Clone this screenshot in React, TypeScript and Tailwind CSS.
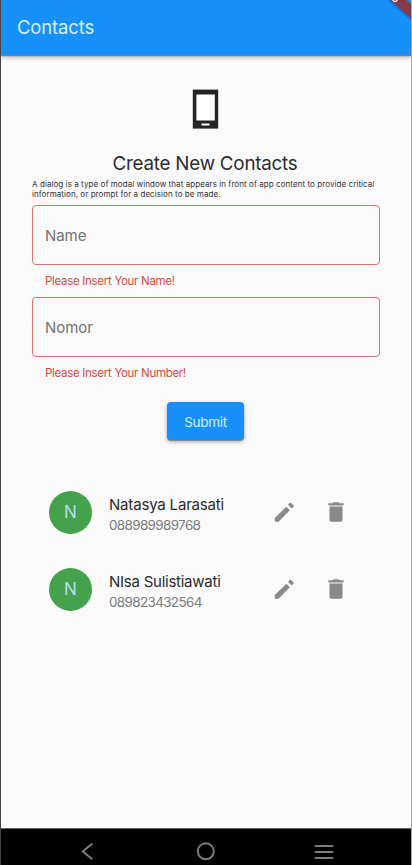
type Contact = { name: string; phone: string; nameSpacing: string };

const contacts: Contact[] = [
  { name: 'Natasya Larasati', phone: '088989989768', nameSpacing: 'tracking-[-0.18px]' },
  { name: 'NIsa Sulistiawati', phone: '089823432564', nameSpacing: 'tracking-[-0.25px]' },
];

function Field({ label, error }: { label: string; error: string }) {
  return (
    <div className="h-[92px]">
      <div className="flex h-[60px] items-center rounded-[4px] border border-[#d4776d] pl-3 pt-[3px] text-[15px] tracking-[-0.05px] text-[#737373]">
        {label}
      </div>
      <p className="pl-[13px] pt-[8px] text-[11.5px] leading-4 tracking-[-0.3px] text-[#d5493c]">{error}</p>
    </div>
  );
}

function ContactRow({ name, phone, nameSpacing }: Contact) {
  return (
    <li className="flex h-[77px] items-center pl-12">
      <div className="flex size-[43px] items-center justify-center rounded-full bg-[#43a24b] pt-[1px] text-[17px] text-[#b5dcf0]">
        N
      </div>
      <div className="ml-[17px] w-[162px] whitespace-nowrap pt-[4px]">
        <p className={`text-[15px] leading-[21px] text-[#2b2b2b] ${nameSpacing}`}>{name}</p>
        <p className="text-[13.5px] leading-[20px] tracking-[-0.67px] text-[#7b7b7b]">{phone}</p>
      </div>
      <svg className="mb-[2px] size-[26px] shrink-0" viewBox="0 0 24 24" fill="#898989">
        <path d="M3.5 17.6V20.4q0 .6.6.6H6.9L17.4 10.3l-3.2-3.2L3.5 17.6zM20.7 7.1a1 1 0 0 0 0-1.3l-2.1-2.1a1 1 0 0 0-1.3 0l-1.6 1.7 3.3 3.4 1.7-1.7z" />
      </svg>
      <svg className="mb-[2px] ml-[25.5px] size-[26px] shrink-0" viewBox="0 0 24 24" fill="#898989">
        <path d="M6 19.4c0 1 .7 1.6 1.6 1.6h8.8c.9 0 1.6-.6 1.6-1.6V7H6v12.4zM19 4h-3.5l-1-1h-5l-1 1H5v2h14V4z" />
      </svg>
    </li>
  );
}

export default function App() {
  return (
    <div className="relative flex h-[865px] w-[412px] flex-col overflow-hidden border-l border-r border-l-[#444] border-r-[#aaa] bg-[#fafafa] font-['Inter',sans-serif]">
      <header className="flex h-[55px] shrink-0 items-center bg-[#1790f9] pl-4 text-[18.5px] tracking-[-0.15px] text-[#d5f1ff] shadow-[0_1px_1px_#77818a,0_2px_5px_rgba(0,0,0,0.35)]">
        <h1>Contacts</h1>
      </header>
      <svg className="absolute right-0 top-0 h-[24px] w-[34px]" viewBox="0 0 34 24">
        <path d="M9 -3L36 21" stroke="#0b4f91" strokeOpacity="0.4" strokeWidth="2.5" />
        <path d="M10 -3L36 20.5V4L28 -3Z" fill="#843c4d" />
        <path d="M27 -2L36 5V-2Z" fill="#1790f9" />
        <path d="M15.5 0.2q3 2.8 5-.7" fill="none" stroke="#f4dce4" strokeWidth="1.5" />
      </svg>

      <main className="flex flex-1 flex-col">
        <svg className="ml-[191px] mt-[34px] h-[40px] w-[27px]" viewBox="0 0 27 40">
          <rect x="0.8" y="0.6" width="25.4" height="39" fill="#242424" />
          <rect x="4.4" y="5.5" width="18.4" height="26" fill="#fff" />
          <rect x="9.5" y="34.5" width="8" height="2" fill="#fff" />
        </svg>
        <h2 className="mt-[21px] whitespace-nowrap pl-[111.5px] text-[18.8px] leading-7 tracking-[-0.22px] text-[#2d2d2d]">Create New Contacts</h2>
        <p className="ml-[31px] mt-[0.5px] whitespace-nowrap text-[8px] leading-[10px] tracking-[0.07px] text-[#333]">
          A dialog is a type of modal window that appears in front of app content to provide critical
          <br />
          information, or prompt for a decision to be made.
        </p>
        <form className="ml-[31px] mt-[6.5px] w-[348px]">
          <Field label="Name" error="Please Insert Your Name!" />
          <Field label="Nomor" error="Please Insert Your Number!" />
          <button
            type="button"
            className="ml-[135px] mt-[13px] block h-[38px] w-[77px] rounded-[4px] bg-[#1790f9] pt-[2px] text-[13.5px] tracking-[-0.3px] text-[#d3efff] shadow-[0_1px_1px_#7b8790,0_2px_4px_rgba(0,0,0,0.3)]"
          >
            Submit
          </button>
        </form>
        <ul className="mt-[34px]">
          {contacts.map((c) => (
            <ContactRow key={c.phone} {...c} />
          ))}
        </ul>
      </main>

      <nav className="h-[37px] shrink-0 border-t border-[#666] bg-black">
        <svg className="block h-[36px] w-[410px]" viewBox="1 829 410 36" fill="none" stroke="#7d7d7d" strokeWidth="2">
          <path d="M92.3 843.5L82.8 851.5L92.3 859.3" />
          <circle cx="205.8" cy="851.3" r="8" />
          <path d="M315.5 846H332.5M315.5 852H332.5M315.5 858H332.5" strokeLinecap="round" />
        </svg>
      </nav>
    </div>
  );
}
